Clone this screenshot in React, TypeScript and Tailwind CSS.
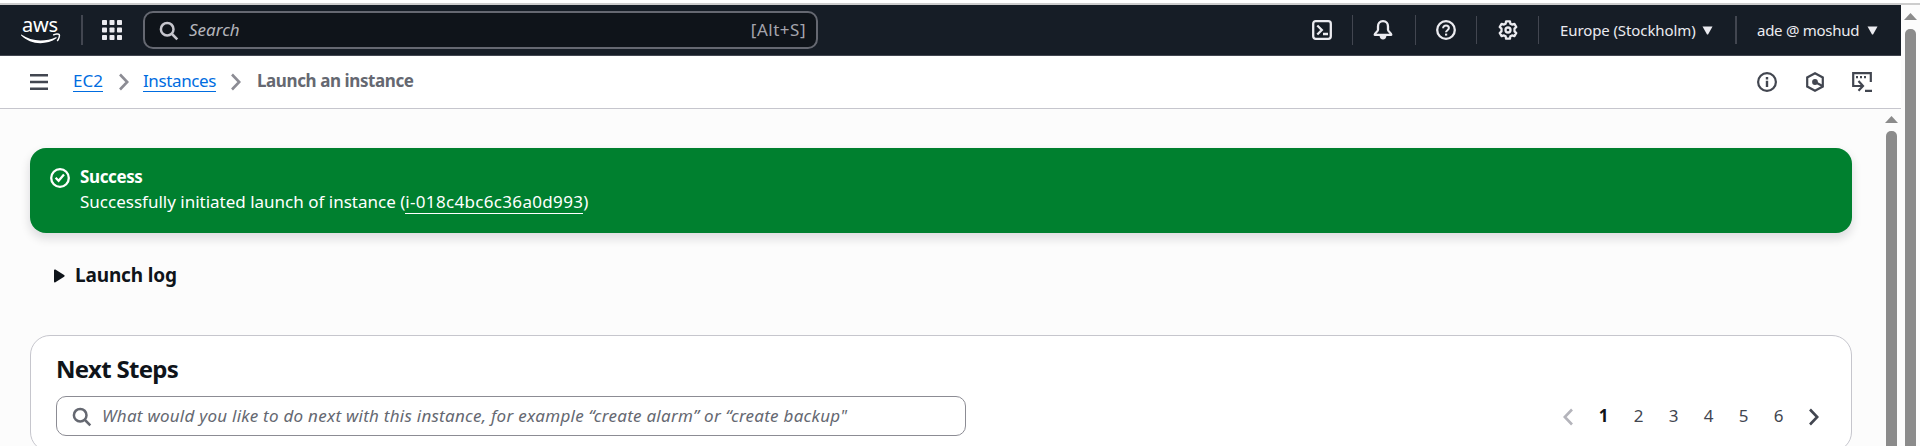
import React from 'react';

function SearchIcon({ className }: { className: string }) {
  return (
    <svg className={className} width="20" height="20" viewBox="0 0 20 20" fill="none" stroke="currentColor" strokeWidth="2.5">
      <circle cx="8.2" cy="8.2" r="6.3" />
      <path d="M12.5 12.5 18.3 18.3" />
    </svg>
  );
}

function Chevron({ className, flip }: { className: string; flip?: boolean }) {
  return (
    <svg className={className} width="10" height="18" viewBox="0 0 10 18" fill="none" stroke="currentColor" strokeWidth="2.6">
      <path d={flip ? 'M9 1.5 1.8 9 9 16.5' : 'M1 1.5 8.2 9 1 16.5'} />
    </svg>
  );
}

function AwsLogo() {
  return (
    <div className="ml-[21px] flex w-10 shrink-0 flex-col">
      <span className="h-[16px] pl-px text-[20px] leading-[15px] tracking-[-0.17px] text-white">aws</span>
      <svg width="40" height="11" viewBox="0 0 40 11" fill="none">
        <path d="M0.3 1.6C6 5.6 12.5 7.4 19.5 7.4c5.2 0 10.8-1.1 15.3-3.2.8-.3 1.4.5.6 1.1C31 8.6 25 10.2 19.4 10.2 12 10.2 5.2 7.3.2 2.5-.2 2.1-.1 1.4.3 1.600Z" fill="#fff" />
        <path d="M32.200 2.200c2-1.300 5.300-1.500 6-.7.700.9-.2 4.700-2 6.500" stroke="#fff" strokeWidth="1.5" />
      </svg>
    </div>
  );
}

function GridIcon() {
  return (
    <svg className="ml-[19px] shrink-0" width="20" height="20" viewBox="0 0 20 20" fill="#ebebf0">
      {[0, 7.5, 15].map((y) => [0, 7.5, 15].map((x) => <rect key={`${x}-${y}`} x={x} y={y} width="5" height="5" rx="0.8" />))}
    </svg>
  );
}

function TopBar() {
  return (
    <header className="flex h-[51px] shrink-0 items-center border-b border-[#424650] bg-[#161d26] text-[#ebebf0]">
      <AwsLogo />
      <div className="ml-5 h-[30px] w-0.5 shrink-0 bg-[#424650]" />
      <GridIcon />
      <div className="ml-[21px] flex h-[38px] w-[675px] shrink-0 items-center rounded-[10px] border-2 border-[#656871] bg-[#0f141a]">
        <SearchIcon className="ml-[14px] mt-0.5 text-[#c6c6cd]" />
        <span className="ml-[10px] text-[17px] italic text-[#b4b4bb]">Search</span>
        <span className="ml-auto mr-[10px] text-[17px] tracking-[0.5px] text-[#a4a4ad]">[Alt+S]</span>
      </div>
      <div className="ml-auto flex shrink-0 items-center">
        <svg width="20" height="20" viewBox="0 0 20 20" fill="none" stroke="currentColor" strokeWidth="2.3">
          <rect x="1.2" y="1.2" width="17.6" height="17.6" rx="2.5" />
          <path d="M5.3 5.5 9.800 10l-4.500 4.500M11 14h5" />
        </svg>
        <div className="ml-5 h-[30px] w-px bg-[#424650]" />
        <svg className="ml-5" width="20" height="20" viewBox="0 0 20 20" fill="none" stroke="currentColor" strokeWidth="2.3">
          <path d="M10 1.200c-3.300 0-5 2.400-5 5.300v3.200c0 2-3.300 3.100-3.300 5.100h16.600c0-2-3.300-3.100-3.300-5.100V6.500c0-2.900-1.700-5.300-5-5.300Z" strokeLinejoin="round" />
          <path d="M6.500 15.500c.2 2.700 1.500 4 3.500 4s3.300-1.300 3.500-4Z" fill="currentColor" stroke="none" />
        </svg>
        <div className="ml-[22px] h-[30px] w-px bg-[#424650]" />
        <svg className="ml-5" width="20" height="20" viewBox="0 0 20 20" fill="none" stroke="currentColor" strokeWidth="2.3">
          <circle cx="10" cy="10" r="8.8" />
          <path d="M7.100 8.300C7.100 6.400 8.300 5.500 10 5.500s2.900 1 2.900 2.600c0 2-2.900 2.200-2.900 4.200" strokeWidth="2" />
          <path d="M9 13.600h2.200v2H9z" fill="currentColor" stroke="none" />
        </svg>
        <div className="ml-5 h-7 w-px bg-[#424650]" />
        <svg className="ml-[21px]" width="20" height="20" viewBox="0 0 20 20" fill="none" stroke="currentColor" strokeWidth="2.3" strokeLinejoin="round">
          <path d="M8.100 1.300h3.800l.5 2.400 1.600.9 2.400-.8 1.900 3.200-1.800 1.700v2.600l1.800 1.700-1.900 3.200-2.400-.8-1.600.9-.5 2.400H8.100l-.5-2.400-1.600-.9-2.400.8L1.700 13l1.800-1.700V8.700L1.700 7l1.900-3.200 2.400.8 1.600-.9Z" />
          <circle cx="10" cy="10" r="2.5" />
        </svg>
        <div className="ml-5 h-7 w-px bg-[#424650]" />
        <span className="ml-[21px] w-[136px] whitespace-nowrap text-[15px] tracking-[-0.1px]">Europe (Stockholm)</span>
        <svg className="ml-[6px]" width="11" height="9" viewBox="0 0 11 9" fill="currentColor">
          <path d="M0.500 0.500h10L6 8.600H5Z" />
        </svg>
        <div className="ml-[22px] h-7 w-0.5 bg-[#424650]" />
        <span className="ml-5 w-[103px] whitespace-nowrap text-[15px] tracking-[-0.28px]">ade @ moshud</span>
        <svg className="ml-[7px] mr-[23px]" width="11" height="9" viewBox="0 0 11 9" fill="currentColor">
          <path d="M0.500 0.500h10L6 8.600H5Z" />
        </svg>
      </div>
    </header>
  );
}

function Breadcrumbs() {
  return (
    <nav className="flex h-[53px] shrink-0 items-center border-b border-[#c6c6cd] bg-white text-[17px] text-[#424650]">
      <svg className="ml-[30px]" width="18" height="16" viewBox="0 0 18 16" fill="currentColor">
        <path d="M0 0h18v2.400H0zM0 6.800h18v2.400H0zM0 13.600h18V16H0z" />
      </svg>
      <a className="-mt-0.5 ml-[25px] w-[30px] border-b border-[#006ce0] leading-[21px] text-[#006ce0]">EC2</a>
      <Chevron className="ml-4 text-[#8c8c94]" />
      <a className="-mt-0.5 ml-[14px] w-[73px] border-b border-[#006ce0] leading-[21px] tracking-[-0.39px] text-[#006ce0]">Instances</a>
      <Chevron className="ml-[15px] text-[#8c8c94]" />
      <span className="-mt-[3px] ml-4 font-bold tracking-[-0.41px] text-[#656871]">Launch an instance</span>
      <div className="ml-auto mr-[29px] flex items-center">
        <svg width="20" height="20" viewBox="0 0 20 20" fill="none" stroke="currentColor" strokeWidth="2.2">
          <circle cx="10" cy="10" r="8.9" />
          <path d="M10 5v2.400M10 8.800V15" strokeWidth="2.4" />
        </svg>
        <svg className="ml-7" width="20" height="20" viewBox="0 0 20 20" fill="none" stroke="currentColor" strokeWidth="2.2">
          <path d="M10 1.300 17.800 5.500v9L10 18.700 2.200 14.500v-9Z" />
          <circle cx="10" cy="10" r="2.9" fill="currentColor" stroke="none" />
          <path d="m10 10 7.500 4" />
        </svg>
        <svg className="ml-[27px]" width="20" height="20" viewBox="0 0 20 20" fill="none" stroke="currentColor" strokeWidth="2.2">
          <path d="M5 14H1.200V1.200h17.600V10M4 14h6M6.500 9l4.500 5-4.500 4.800" />
          <path d="M4 5.200h2M8 5.200h2M12 5.200h2M13 18.900h7" />
        </svg>
      </div>
    </nav>
  );
}

function SuccessAlert() {
  return (
    <section className="ml-[30px] mt-[39px] flex h-[85px] w-[1822px] shrink-0 rounded-[16px] bg-[#00802f] pl-5 pt-4 text-[17px] text-white shadow-[0_5px_10px_1px_rgba(0,7,22,0.12)]">
      <svg className="mt-1" width="20" height="20" viewBox="0 0 20 20" fill="none" stroke="currentColor" strokeWidth="2.3">
        <circle cx="10" cy="10" r="8.8" />
        <path d="m5.600 9.800 3 3L14 6.500" />
      </svg>
      <div className="ml-[10px] whitespace-nowrap leading-[25px]">
        <div className="font-bold tracking-[-0.38px]">Success</div>
        <div className="flex">
          <span>Successfully initiated launch of instance (</span>
          <a className="h-[25px] w-[178px] border-b border-white tracking-[0.33px]">i-018c4bc6c36a0d993</a>
          <span>)</span>
        </div>
      </div>
    </section>
  );
}

function NextSteps() {
  return (
    <section className="ml-[30px] mt-[45px] h-[117px] w-[1822px] shrink-0 rounded-[20px] border border-[#c6c6cd] bg-white">
      <h2 className="ml-[25px] mt-[18px] text-[24px] font-bold leading-[30px] tracking-[-0.7px] text-[#0f141a]">Next Steps</h2>
      <div className="ml-[25px] mt-3 flex items-center">
        <div className="flex h-10 w-[910px] items-center rounded-[10px] border border-[#8c8c94]">
          <SearchIcon className="ml-[15px] mt-0.5 text-[#656871]" />
          <span className="-mt-px ml-[10px] whitespace-nowrap text-[17px] italic tracking-[0.255px] text-[#656871]">
            What would you like to do next with this instance, for example “create alarm” or “create backup"
          </span>
        </div>
        <div className="ml-auto mr-[32px] flex items-center text-[17px] text-[#424650]">
          <Chevron flip className="mr-[13px] mt-0.5 text-[#b4b4bb]" />
          {[1, 2, 3, 4, 5, 6].map((page) => (
            <span key={page} className={page === 1 ? '-mt-px w-[35px] text-center font-bold text-[#0f141a]' : '-mt-px w-[35px] text-center'}>
              {page}
            </span>
          ))}
          <Chevron className="ml-[13px] mt-0.5" />
        </div>
      </div>
    </section>
  );
}

function ScrollArrow({ className }: { className: string }) {
  return (
    <svg className={className} width="13" height="7" viewBox="0 0 13 7" fill="#8b8b8b">
      <path d="M6.500 0 13 7H0Z" />
    </svg>
  );
}

export default function App() {
  return (
    <div className="flex h-[446px] w-[1920px] flex-col overflow-hidden bg-[#fcfcfc] font-['Noto_Sans',sans-serif]">
      <div className="h-[5px] shrink-0 border-b-2 border-[#cdcdcd] bg-white" />
      <div className="flex min-h-0 flex-1">
        <div className="flex w-[1901px] shrink-0 flex-col">
          <TopBar />
          <Breadcrumbs />
          <div className="flex min-h-0 flex-1">
            <main className="flex w-[1884px] shrink-0 flex-col">
              <SuccessAlert />
              <div className="ml-[54px] mt-[28px] flex h-[29px] shrink-0 items-center text-[#0f141a]">
                <svg width="11" height="14" viewBox="0 0 11 14" fill="currentColor">
                  <path d="M0 1.200C0 .3.800.2 1.400.6l8.700 5.500c.8.500.8 1.100 0 1.600l-8.700 5.500C.8 13.600 0 13.500 0 12.600Z" />
                </svg>
                <span className="ml-[10px] text-[19px] font-bold tracking-[-0.15px]">Launch log</span>
              </div>
              <NextSteps />
            </main>
            <div className="flex w-[17px] flex-col items-center pr-[2px]">
              <ScrollArrow className="mt-[7px] shrink-0" />
              <div className="mt-2 w-[11px] flex-1 rounded-t-[5px] bg-[#8b8b8b]" />
            </div>
          </div>
        </div>
        <div className="flex w-[19px] flex-col items-center">
          <ScrollArrow className="mt-2 shrink-0" />
          <div className="mt-[9px] w-[11px] flex-1 rounded-t-[5px] bg-[#8b8b8b]" />
        </div>
      </div>
    </div>
  );
}
